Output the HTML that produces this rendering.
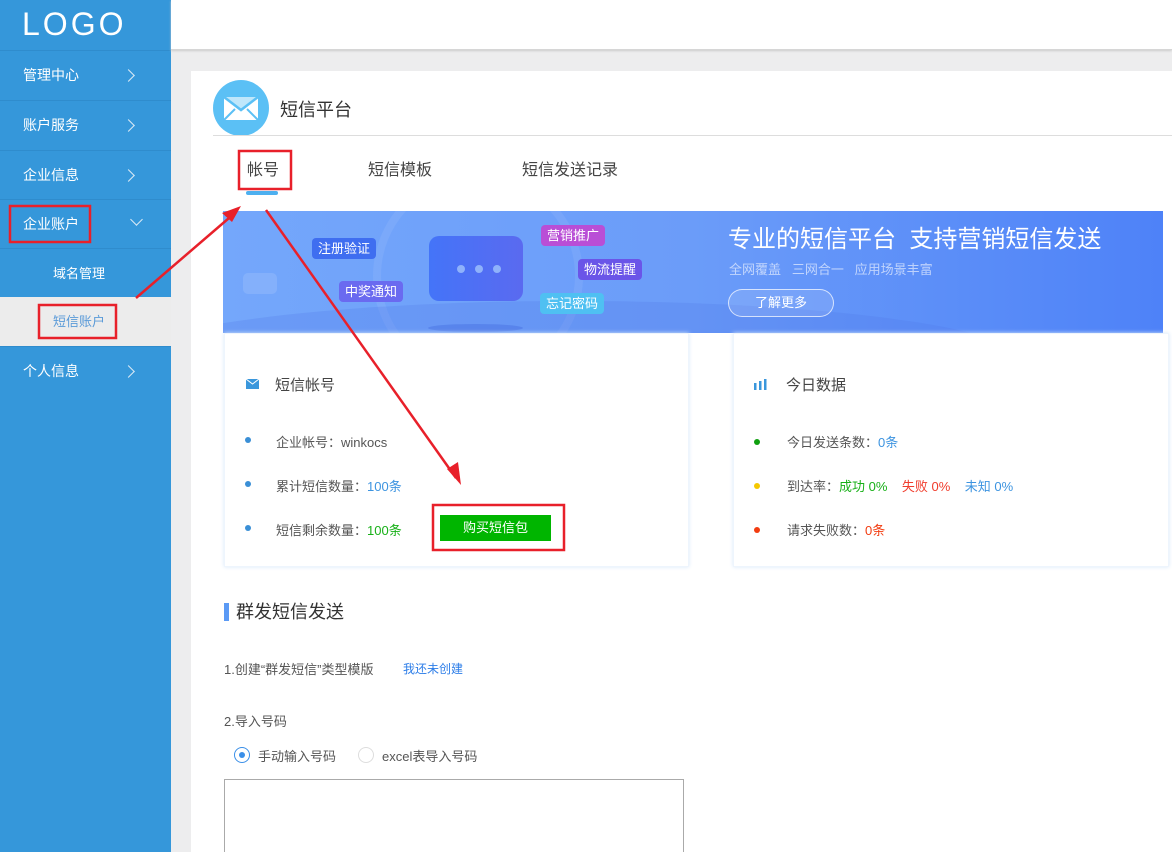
<!DOCTYPE html>
<html style="overflow:hidden;width:1172px;height:852px"><head><meta charset="utf-8"><style>
*{margin:0;padding:0;box-sizing:border-box}
body{width:1172px;height:852px;overflow:hidden;background:#ededee;font-family:"Liberation Sans","Noto Sans CJK SC",sans-serif;position:relative;color:#555}
.abs{position:absolute}
#side{left:0;top:0;width:171px;height:852px;background:#3597da}
.logo{left:22px;top:6px;font-size:32px;color:#fff;letter-spacing:3px;line-height:36px}
.mi{left:0;width:171px;height:49px;border-top:1px solid #2f8ccd;color:#fff;font-size:14px;line-height:49px;padding-left:23px}
.mi .ch{position:absolute;left:124px;top:20px;width:9px;height:9px;border-top:1px solid #dbeaf6;border-right:1px solid #dbeaf6;transform:rotate(45deg)}
#top{left:171px;top:0;width:1001px;height:50px;background:#fff;border-bottom:1px solid #d6d6d6;box-shadow:0 1px 2px #ccc}
#card{left:191px;top:71px;width:990px;height:781px;background:#fff;overflow:hidden}
.t{position:absolute;white-space:nowrap}
.box{position:absolute;background:#fff;box-shadow:0 0 4px #d8e8fa;border:1px solid #eef5fd}
.dot{position:absolute;width:6px;height:6px;border-radius:50%}
.tag{position:absolute;color:#fff;font-size:13px;padding:2px 6px;border-radius:4px;line-height:17px}
</style></head><body>
<div id="side" class="abs">
<div class="abs logo">LOGO</div>
<div class="abs mi" style="top:50px">管理中心<span class="ch"></span></div>
<div class="abs mi" style="top:100px">账户服务<span class="ch"></span></div>
<div class="abs mi" style="top:150px">企业信息<span class="ch"></span></div>
<div class="abs mi" style="top:199px">企业账户<span class="ch" style="transform:rotate(135deg);top:15px;left:132px"></span></div>
<div class="abs mi" style="top:248px;padding-left:53px;font-size:13px">域名管理</div>
<div class="abs" style="top:297px;left:0;width:171px;height:49px;background:#ececec;color:#5a9ad8;font-size:13px;line-height:49px;padding-left:53px">短信账户</div>
<div class="abs mi" style="top:346px">个人信息<span class="ch"></span></div>
</div>
<div id="top" class="abs"></div>
<div id="card" class="abs">
<svg class="abs" style="left:22px;top:9px" width="56" height="56" viewBox="0 0 56 56"><circle cx="28" cy="28" r="28" fill="#5bc0f5"/><rect x="11" y="17" width="34" height="23" fill="#fff"/><path d="M11 17 L28 30 L45 17" fill="#bfe7fb" stroke="#5bc0f5" stroke-width="2.5"/><path d="M11 40 L22 29 M45 40 L34 29" stroke="#5bc0f5" stroke-width="2"/></svg>
<div class="t" style="left:89px;top:27px;font-size:18px;color:#333;line-height:24px">短信平台</div>
<div class="abs" style="left:22px;top:64px;width:980px;height:1px;background:#ddd"></div>
<div class="t" style="left:56px;top:89px;font-size:16px;color:#444;line-height:22px">帐号</div>
<div class="abs" style="left:55px;top:120px;width:32px;height:4px;border-radius:2px;background:#4db0f0"></div>
<div class="t" style="left:177px;top:89px;font-size:16px;color:#444;line-height:22px">短信模板</div>
<div class="t" style="left:331px;top:89px;font-size:16px;color:#444;line-height:22px">短信发送记录</div>
</div>
<!-- banner -->
<div class="abs" style="left:223px;top:211px;width:940px;height:122px;background:linear-gradient(90deg,#74a7fb,#6b9cf9 50%,#4e82f8);overflow:hidden">
<div class="abs" style="left:150px;top:-40px;width:210px;height:210px;border-radius:50%;border:8px solid rgba(255,255,255,.07)"></div>
<div class="abs" style="left:-100px;top:90px;width:900px;height:120px;border-radius:50%;background:rgba(80,120,230,.25)"></div>
<div class="abs" style="left:20px;top:62px;width:34px;height:21px;border-radius:5px;background:rgba(255,255,255,.12)"></div>
<div class="abs" style="left:206px;top:25px;width:94px;height:65px;border-radius:10px;background:linear-gradient(90deg,#4474f8,#5a6af0)"></div>
<div class="abs" style="left:234px;top:54px;width:8px;height:8px;border-radius:50%;background:#8fb2fb;box-shadow:18px 0 #8fb2fb,36px 0 #8fb2fb"></div>
<div class="abs" style="left:205px;top:113px;width:95px;height:8px;border-radius:50%;background:rgba(60,100,220,.35)"></div>
<div class="tag" style="left:89px;top:27px;background:#3f6ef0">注册验证</div>
<div class="tag" style="left:116px;top:70px;background:#6a6af0">中奖通知</div>
<div class="tag" style="left:318px;top:14px;background:#b94ed6">营销推广</div>
<div class="tag" style="left:355px;top:48px;background:#6a55e8">物流提醒</div>
<div class="tag" style="left:317px;top:82px;background:#4fc0f2">忘记密码</div>
<div class="t" style="left:505px;top:13px;font-size:24px;color:#fff;line-height:32px">专业的短信平台&nbsp; 支持营销短信发送</div>
<div class="t" style="left:506px;top:48px;font-size:13px;color:rgba(255,255,255,.6)">全网覆盖&nbsp;&nbsp; 三网合一&nbsp;&nbsp; 应用场景丰富</div>
<div class="abs" style="left:505px;top:78px;width:106px;height:28px;border:1px solid rgba(255,255,255,.7);border-radius:14px;background:rgba(255,255,255,.12);color:#fff;font-size:13px;text-align:center;line-height:26px">了解更多</div>
</div>
<!-- left card -->
<div class="box" style="left:224px;top:333px;width:465px;height:234px">
<svg class="abs" style="left:21px;top:45px" width="13" height="10"><rect width="13" height="10" fill="#3a97dc"/><path d="M0 0 L6.5 5 L13 0" stroke="#fff" fill="none"/></svg>
<div class="t" style="left:50px;top:40px;font-size:15px;color:#444">短信帐号</div>
<div class="dot" style="left:20px;top:103px;background:#3a8fd6"></div>
<div class="t" style="left:51px;top:98px;font-size:13px">企业帐号：winkocs</div>
<div class="dot" style="left:20px;top:147px;background:#3a8fd6"></div>
<div class="t" style="left:51px;top:142px;font-size:13px">累计短信数量：<span style="color:#3d94e0">100条</span></div>
<div class="dot" style="left:20px;top:191px;background:#3a8fd6"></div>
<div class="t" style="left:51px;top:186px;font-size:13px">短信剩余数量：<span style="color:#18b018">100条</span></div>
<div class="abs" style="left:215px;top:181px;width:111px;height:26px;background:#00b500;color:#fff;font-size:13px;text-align:center;line-height:26px">购买短信包</div>
</div>
<!-- right card -->
<div class="box" style="left:733px;top:333px;width:436px;height:234px">
<svg class="abs" style="left:20px;top:45px" width="13" height="11"><rect x="0" y="4" width="2.5" height="7" fill="#3a97dc"/><rect x="5" y="2" width="2.5" height="9" fill="#3a97dc"/><rect x="10" y="0" width="2.5" height="11" fill="#3a97dc"/></svg>
<div class="t" style="left:52px;top:40px;font-size:15px;color:#444">今日数据</div>
<div class="dot" style="left:20px;top:105px;background:#10a010"></div>
<div class="t" style="left:53px;top:98px;font-size:13px">今日发送条数：<span style="color:#3d94e0">0条</span></div>
<div class="dot" style="left:20px;top:149px;background:#f5c800"></div>
<div class="t" style="left:53px;top:142px;font-size:13px">到达率：<span style="color:#18b018">成功 0%</span>&nbsp;&nbsp;&nbsp; <span style="color:#f03c2c">失败 0%</span>&nbsp;&nbsp;&nbsp; <span style="color:#3d94e0">未知 0%</span></div>
<div class="dot" style="left:20px;top:193px;background:#f23c10"></div>
<div class="t" style="left:53px;top:186px;font-size:13px">请求失败数：<span style="color:#f23c10">0条</span></div>
</div>
<!-- section -->
<div class="abs" style="left:224px;top:603px;width:5px;height:18px;background:#5b9af5"></div>
<div class="t" style="left:236px;top:600px;font-size:18px;color:#333;line-height:24px">群发短信发送</div>
<div class="t" style="left:224px;top:659px;font-size:13px">1.创建“群发短信”类型模版</div>
<div class="t" style="left:403px;top:660px;font-size:12px;color:#2c7de8">我还未创建</div>
<div class="t" style="left:224px;top:711px;font-size:13px">2.导入号码</div>
<div class="abs" style="left:234px;top:747px;width:16px;height:16px;border-radius:50%;border:1px solid #3a8fe8"></div>
<div class="abs" style="left:239px;top:752px;width:6px;height:6px;border-radius:50%;background:#3a8fe8"></div>
<div class="t" style="left:258px;top:746px;font-size:13px">手动输入号码</div>
<div class="abs" style="left:358px;top:747px;width:16px;height:16px;border-radius:50%;border:1px solid #ddd"></div>
<div class="t" style="left:382px;top:746px;font-size:13px">excel表导入号码</div>
<div class="abs" style="left:224px;top:779px;width:460px;height:90px;border:1px solid #aaa"></div>
<!-- annotations -->
<svg class="abs" style="left:0;top:0" width="1172" height="852">
<g fill="none" stroke="#e8202a" stroke-width="2.5">
<rect x="10" y="206" width="80" height="36"/>
<rect x="39" y="305" width="77" height="33"/>
<rect x="239" y="151" width="52" height="38"/>
<rect x="433" y="505" width="131" height="45"/>
<line x1="136" y1="298" x2="236" y2="212"/>
<line x1="266" y1="210" x2="456" y2="478"/>
</g>
<path d="M241 206 L222 213 L232 222 Z" fill="#e8202a"/>
<path d="M461 485 L447 469 L458 462 Z" fill="#e8202a"/>
</svg>
</body></html>
